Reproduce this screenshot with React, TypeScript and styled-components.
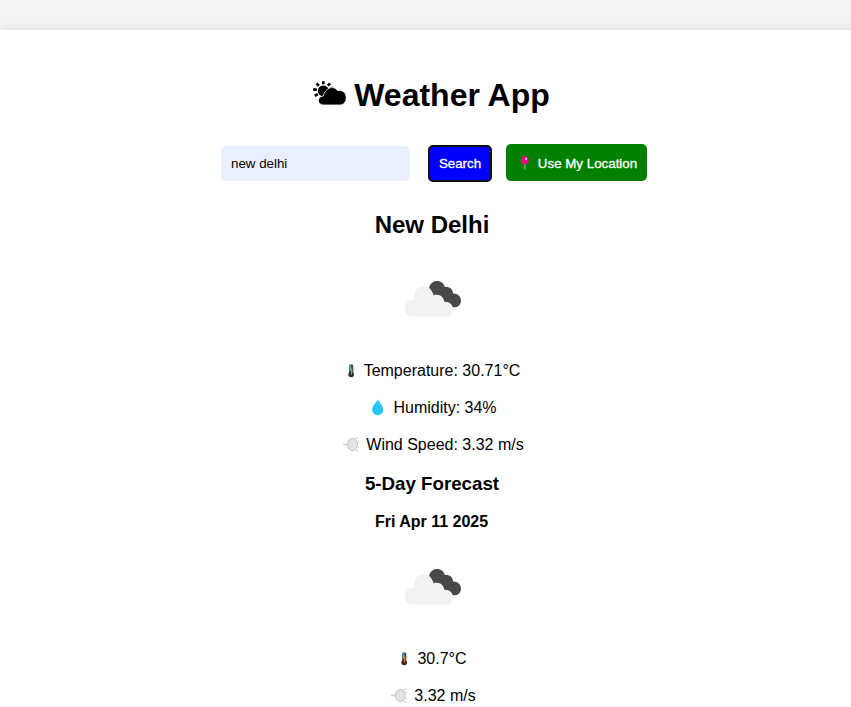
import React, { useState } from "react";
import styled, { createGlobalStyle } from "styled-components";

const GlobalStyle = createGlobalStyle`
  * { box-sizing: border-box; }
  body {
    margin: 0;
    height: 707px;
    overflow: hidden;
    background: #f3f3f3;
    color: #000;
    font-family: "Liberation Sans", Arial, sans-serif;
  }
`;

const Page = styled.div`
  padding-top: 30px;
  height: 707px;
  overflow: hidden;
`;

const Card = styled.main`
  display: flex;
  flex-direction: column;
  align-items: center;
  width: 864px;
  height: 760px;
  padding-top: 46px;
  background: #fff;
  box-shadow: 0 0 10px rgba(0, 0, 0, 0.1);
`;

const Title = styled.h1`
  display: flex;
  align-items: center;
  gap: 8px;
  height: 38px;
  margin: 0 1px 30px 0;
  font-size: 32px;
  line-height: 38px;
  white-space: nowrap;
`;

const SearchBar = styled.form`
  display: flex;
  align-items: flex-start;
  height: 38px;
  margin: 0 0 29px 4px;
`;

const CityInput = styled.input`
  width: 189px;
  height: 35px;
  margin: 2px 18px 0 0;
  padding: 0 10px;
  border: 0;
  border-radius: 5px;
  outline: none;
  background: #e8f0fe;
  color: #000;
  font: 13.333px "Liberation Sans", Arial, sans-serif;
`;

const Button = styled.button`
  display: flex;
  align-items: center;
  justify-content: center;
  height: 37px;
  padding: 0;
  border: 0;
  border-radius: 5px;
  color: #fff;
  font: 13.333px "Liberation Sans", Arial, sans-serif;
  -webkit-text-stroke: 0.3px #fff;
  white-space: nowrap;
`;

const SearchButton = styled(Button)`
  width: 64px;
  margin: 1px 14px 0 0;
  border: 2px solid #101010;
  background: #0000ff;
`;

const LocationButton = styled(Button)`
  width: 141px;
  padding-top: 1px;
  gap: 5px;
  background: #008000;
`;

const City = styled.h2`
  height: 28px;
  margin: 0 0 10px;
  font-size: 24px;
  line-height: 28px;
`;

const SectionTitle = styled.h3`
  height: 22px;
  margin: 0 0 18px;
  font-size: 18.72px;
  line-height: 22px;
`;

const Day = styled.h4`
  height: 18px;
  margin: 0 1px 6px 0;
  font-size: 16px;
  line-height: 18px;
`;

const WeatherIcon = styled.svg`
  flex: none;
  width: 100px;
  height: 100px;
  margin-bottom: 13px;
`;

const Reading = styled.p<{ $indent?: number }>`
  display: flex;
  align-items: center;
  gap: 4px;
  height: 18px;
  margin: 0 0 19px ${({ $indent = 0 }) => $indent}px;
  font-size: 16px;
  line-height: 18px;
  white-space: nowrap;
`;

const Glyph = styled.svg`
  flex: none;
  display: block;
`;

const SunCloud = () => (
  <Glyph width="33" height="28" viewBox="0 0 33 28">
    <path
      d="M10.3.3v3M3.6 2.4l2.2 2.4M17 2.4l-2.1 2.3M.2 8.3l3.6.5M1.8 14.9l3-1.7M20.3 6.8l-2.6.9"
      stroke="#000"
      strokeWidth="2.7"
    />
    <circle cx="10.3" cy="9.9" r="5.5" />
    <path
      stroke="#fff"
      strokeWidth="0.8"
      d="M10.7 24C3.8 24 3.7 15.4 10.2 15 12 7.4 20.4 3.4 24.4 9.5 35.6 7.6 35.9 24 26.6 24Z"
    />
  </Glyph>
);

const BrokenClouds = () => (
  <WeatherIcon viewBox="0 0 100 100" aria-label="Broken clouds">
    <path
      fill="#484848"
      d="M47 39c1-4.2 4.2-6.9 8.4-6.9 3.6 0 6.4 2.2 7.5 6 4.5-.8 8 2 8.2 6.3 4.5-.2 7.9 2.9 7.9 7 0 4-3 6.9-7 6.9-2.6 0-4.8-1-6-3L52 48Z"
    />
    <path
      fill="#f2f2f2"
      d="M31 67.5c-11 0-11-16.2.8-17.2C31.5 42.5 36 37.3 41.5 37.3c5 0 8.6 3.5 10.1 9 5.6-1.7 10.2 1.3 10.7 6.6 5-.4 8.4 2.6 8.4 6.8 0 4.5-3.2 7.8-7.4 7.8Z"
    />
  </WeatherIcon>
);

const Thermometer = () => (
  <Glyph width="16" height="18" viewBox="0 0 16 18">
    <rect x="5.2" y="2.5" width="4" height="10" rx="1.2" fill="#304c56" />
    <circle cx="7.2" cy="12.5" r="2.8" fill="#302c2a" />
    <path d="M6.5 3.5v5" stroke="#49b9d8" strokeWidth="1.2" />
    <path d="M7.6 6.5v6" stroke="#dc8b42" strokeWidth="1.1" />
    <path d="M9.2 4.5h1.4M9.2 6.5h1.4M9.2 8.5h1.4" stroke="#a6a6a6" strokeWidth=".6" />
  </Glyph>
);

const Droplet = () => (
  <Glyph width="20" height="18" viewBox="0 0 20 18">
    <path fill="#26c6fb" d="M8.7.5C7 3.7 3.1 6.9 3.1 10.6a5.6 5.6 0 0 0 11.2 0C14.3 6.9 10.4 3.7 8.7.5Z" />
  </Glyph>
);

const Wind = () => (
  <Glyph width="20" height="18" viewBox="0 0 20 18">
    <path d="M1 8.5h6" stroke="#cfcfcf" strokeWidth="1.7" />
    <path d="m4.5 8.5 3.1-4.7h3.3v9.8H7.6Z" fill="#c8c8c8" />
    <ellipse cx="10.5" cy="8.5" rx="5" ry="6.2" fill="#e3e3e3" stroke="#c5c5c5" />
    <path d="m14.4 2.7 1.6-.9M15.9 5.5l.8-.3M16 11.5l.8.4M14.5 14.5l1.7.8" stroke="#c5c5c5" strokeWidth="1.3" />
  </Glyph>
);

const Pin = () => (
  <Glyph width="17" height="18" viewBox="0 0 17 18">
    <path d="M8.8 8v7.5" stroke="#9aaba2" strokeWidth="1.2" />
    <circle cx="8.8" cy="6.2" r="4" fill="#f5058e" />
    <circle cx="10" cy="4.8" r="1.1" fill="#ffc1e1" />
  </Glyph>
);

export default function App() {
  const [city, setCity] = useState("new delhi");

  return (
    <Page>
      <GlobalStyle />
      <Card>
        <Title><SunCloud />Weather App</Title>
        <SearchBar onSubmit={(event) => event.preventDefault()}>
          <CityInput aria-label="City" value={city} onChange={(event) => setCity(event.target.value)} />
          <SearchButton type="submit">Search</SearchButton>
          <LocationButton type="button"><Pin />Use My Location</LocationButton>
        </SearchBar>
        <City>New Delhi</City>
        <BrokenClouds />
        <Reading><Thermometer />Temperature: 30.71°C</Reading>
        <Reading $indent={2}><Droplet />Humidity: 34%</Reading>
        <Reading $indent={2}><Wind />Wind Speed: 3.32 m/s</Reading>
        <SectionTitle>5-Day Forecast</SectionTitle>
        <Day>Fri Apr 11 2025</Day>
        <BrokenClouds />
        <Reading><Thermometer />30.7°C</Reading>
        <Reading $indent={2}><Wind />3.32 m/s</Reading>
      </Card>
    </Page>
  );
}
